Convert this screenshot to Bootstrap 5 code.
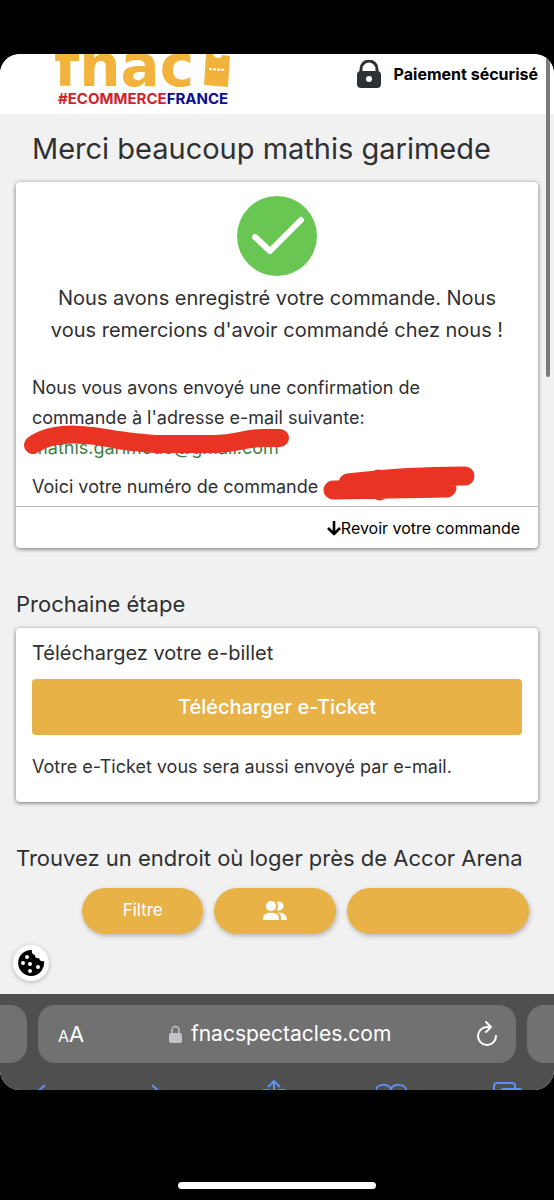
<!DOCTYPE html>
<html lang="fr">
<head>
<meta charset="utf-8">
<meta name="viewport" content="width=device-width, initial-scale=1">
<title>Confirmation de commande</title>
<link href="https://cdn.jsdelivr.net/npm/bootstrap@5.3.0/dist/css/bootstrap.min.css" rel="stylesheet">
<style>
  body { background: #000; color: #2f3032; font-family: Inter, "Liberation Sans", sans-serif; }
  .phone { min-height: 100vh; padding-top: 54px; }
  .viewport { background: #f1f1f1; border-radius: 20px; overflow: hidden; }
  .site-head { height: 60px; padding: 0 16px 0 54px; }
  .brand { height: 60px; overflow: hidden; text-decoration: none; }
  .brand-name { color: #f2b33d; font: 700 58px/24px "DejaVu Sans", sans-serif; height: 36px; }
  .brand-name span { display: block; }
  .tagline { font: 700 15px/18px Inter, sans-serif; color: #d0232b; padding-left: 4px; }
  .tagline b { color: #0b0b94; font-weight: 700; }
  .secure { color: #000; font-size: 16px; font-weight: 700; gap: 12px; height: 40px; }
  .page-title { font-size: 29px; line-height: 36px; font-weight: 400; padding: 17px 16px 15px; margin: 0; }
  .panel { background: #fff; border-radius: 4px; box-shadow: 0 1px 4px rgba(0,0,0,.55); }
  .order-body { padding: 14px 16px 0; }
  .lead-text { font-size: 20px; line-height: 32px; padding: 6px 12px 3px; }
  .body-text { font-size: 18px; line-height: 30px; }
  .mail-text { padding-right: 32px; margin-bottom: 9px; }
  .order-foot { border-top: 1px solid #b9b9b9; height: 42px; padding: 0 18px; }
  .order-foot a { color: #000; font-size: 16px; text-decoration: none; }
  .mail-link { color: #3f7d43; text-decoration: none; }
  .scribble { position: absolute; pointer-events: none; overflow: visible; }
  .scribble-mail { left: -9px; top: -5px; }
  .scribble-number { left: 100%; top: -8px; }
  .section-title { font-size: 22px; line-height: 32px; font-weight: 400; margin: 0; }
  .sub-title { font-size: 20px; line-height: 30px; font-weight: 400; padding-top: 2px; margin: 0 0 11px; }
  .btn-gold, .btn-gold:hover { background: #e8b247; color: #fff; border: 0; }
  .btn-ticket { font-size: 20px; height: 56px; border-radius: 4px; font-weight: 500; }
  .ticket-note { padding-top: 17px; }
  .pills { padding: 14px 25px 0 82px; gap: 11px; }
  .pill { height: 46px; border-radius: 23px; font-size: 17px; flex: 2 1 0; padding: 0; box-shadow: 1px 2px 5px rgba(0,0,0,.25); }
  .pill-wide { flex: 3 1 0; }
  .cookie { width: 36px; height: 36px; margin: 11px 0 13px 13px; box-shadow: 0 1px 5px rgba(0,0,0,.25); background: #fff; }
  .scroll-thumb { position: absolute; right: 4px; top: 0; width: 4px; height: 323px; background: #7b7b7b; border-radius: 0 0 2px 2px; }
  .browser-bar { background: #4f4f4f; padding-top: 11px; }
  .tab-edge, .address { background: #717172; height: 58px; }
  .tab-edge { width: 27px; }
  .tab-prev { border-radius: 0 17px 17px 0; }
  .tab-next { border-radius: 17px 0 0 17px; }
  .address { border-radius: 17px; margin: 0 11px; padding: 0 18px 0 20px; color: #fff; }
  .address button { background: none; border: 0; color: #fff; padding: 0; }
  .text-size { font-size: 22px; }
  .text-size small { font-size: 16px; }
  .url { font-size: 21px; gap: 9px; }
  .tools { height: 27px; padding: 17px 30px 0 28px; overflow: hidden; }
  .tools button { background: none; border: 0; padding: 0; height: 32px; }
  .tools svg, .pill svg, .cookie svg, .scribble { display: block; }
  .home-zone { padding: 92px 0 10px; }
  .home-line { width: 198px; height: 7px; border-radius: 4px; background: #fff; }
</style>
</head>
<body>
<div class="phone">
  <div class="viewport position-relative">
    <header class="site-head bg-white d-flex justify-content-between">
      <a href="#" class="brand">
        <div class="brand-name d-flex">
          <span>fnac</span>
          <svg class="ms-2" width="28" height="33" viewBox="0 0 28 33"><path fill="#f2b33d" d="M4 0H11C12 5 20 5 20 1L28 2L26 33L2 31Z"/><path stroke="#fff" stroke-width="2" stroke-dasharray="3 1" d="M7 15L22 16"/></svg>
        </div>
        <div class="tagline">#ECOMMERCE<b>FRANCE</b></div>
      </a>
      <div class="secure d-flex align-items-center">
        <svg width="26" height="28" viewBox="0 0 26 28"><path d="M5 12V9a8 8 0 0 1 16 0V12" fill="none" stroke="#2f3032" stroke-width="3"/><rect x="1" y="11" width="24" height="17" rx="4" fill="#2f3032"/><circle cx="13" cy="19" r="3" fill="#fff"/></svg>
        <span>Paiement sécurisé</span>
      </div>
    </header>

    <main>
      <div class="px-3">
        <h1 class="page-title">Merci beaucoup mathis garimede</h1>
        <section class="panel">
          <div class="order-body">
            <svg class="d-block mx-auto" width="80" height="80" viewBox="0 0 80 80"><circle cx="40" cy="40" r="40" fill="#69c653"/><path d="M18 41L33 55L64 24" fill="none" stroke="#fff" stroke-width="6" stroke-linecap="round" stroke-linejoin="round"/></svg>
            <p class="lead-text text-center mb-4">Nous avons enregistré votre commande. Nous vous remercions d'avoir commandé chez nous !</p>
            <p class="body-text mail-text">Nous vous avons envoyé une confirmation de commande à l'adresse e-mail suivante:<br>
              <span class="position-relative d-inline-block"><a class="mail-link" href="#">mathis.garimede@gmail.com</a>
                <svg class="scribble scribble-mail" width="268" height="32" viewBox="0 0 268 32"><path d="M10 17C32 1 70 7 95 12C125 17 140 16 190 16C215 16 220 10 240 10H257" fill="none" stroke="#e93323" stroke-width="18" stroke-linecap="round"/></svg></span></p>
            <p class="body-text mb-1"><span class="position-relative d-inline-block">Voici votre numéro de commande
                <svg class="scribble scribble-number" width="158" height="38" viewBox="0 0 158 38"><path d="M15 26L129 24M30 19Q84 12 147 12M60 15L62 27M30 22L129 20" fill="none" stroke="#e93323" stroke-width="19" stroke-linecap="round" stroke-linejoin="round"/></svg></span></p>
          </div>
          <div class="order-foot d-flex align-items-center justify-content-end">
            <a href="#" class="d-flex align-items-center"><svg width="14" height="16" viewBox="0 0 14 16"><path d="M7 1V14M1 8L7 14L13 8" fill="none" stroke="#000" stroke-width="2.6" stroke-linejoin="round"/></svg>Revoir votre commande</a>
          </div>
        </section>

        <h2 class="section-title pt-4 mt-3 pb-2">Prochaine étape</h2>
        <section class="panel px-3 pt-2 pb-3">
          <h3 class="sub-title">Téléchargez votre e-billet</h3>
          <button class="btn btn-gold btn-ticket w-100" type="button">Télécharger e-Ticket</button>
          <p class="body-text ticket-note mb-1">Votre e-Ticket vous sera aussi envoyé par e-mail.</p>
        </section>
        <h2 class="section-title text-nowrap pt-4 mt-3">Trouvez un endroit où loger près de Accor Arena</h2>
      </div>
      <div class="pills d-flex">
        <button class="btn btn-gold pill" type="button">Filtre</button>
        <button class="btn btn-gold pill d-flex align-items-center justify-content-center" type="button" aria-label="Voyageurs">
          <svg width="24" height="20" viewBox="0 0 24 20" fill="#fff"><circle cx="8" cy="5" r="5"/><path d="M14 1a4.500 4.500 0 1 1 0 8q2-4 0-8M0 19v-2c0-7 16-7 16 0v2zM18 19q1-5-3-7c5-1 9 2 9 7z"/></svg>
        </button>
        <button class="btn btn-gold pill pill-wide" type="button" aria-label="Dates"></button>
      </div>
      <button class="cookie btn rounded-circle p-0 d-flex align-items-center justify-content-center" type="button" aria-label="Cookies">
        <svg width="28" height="28" viewBox="0 0 28 28"><path d="M15 1A13 13 0 1 0 27 12Q23 13 22 9Q18 10 18 6Q14 5 15 1Z"/><g fill="#fff"><circle cx="10" cy="8" r="2"/><circle cx="6" cy="14" r="2"/><circle cx="13" cy="15" r="2"/><circle cx="21" cy="18" r="2"/><circle cx="13" cy="22" r="2"/></g></svg>
      </button>
    </main>
    <div class="scroll-thumb"></div>

    <footer class="browser-bar">
      <div class="d-flex">
        <div class="tab-edge tab-prev"></div>
        <div class="address flex-grow-1 d-flex align-items-center justify-content-between">
          <button class="text-size" type="button"><small>A</small>A</button>
          <button class="url d-flex align-items-center" type="button">
            <svg width="13" height="18" viewBox="0 0 13 18"><path d="M3 9V5a3.500 3.500 0 0 1 7 0V9" fill="none" stroke="#c3c2c8" stroke-width="1.500"/><rect y="8" width="13" height="10" rx="2" fill="#c3c2c8"/></svg>
            fnacspectacles.com</button>
          <button type="button" aria-label="Actualiser"><svg class="d-block" width="22" height="26" viewBox="0 0 22 26" fill="none" stroke="#fff" stroke-width="2" stroke-linecap="round" stroke-linejoin="round"><path d="M20 15A9 9 0 1 1 11 6H15M10 1L15 6L10 11"/></svg></button>
        </div>
        <div class="tab-edge tab-next"></div>
      </div>
      <div class="tools d-flex justify-content-between">
        <button type="button" aria-label="Précédent"><svg width="32" height="32" viewBox="0 0 32 32" fill="none" stroke="#5f8ff0" stroke-width="2"><path d="M17 5L6 15L17 26"/></svg></button>
        <button type="button" aria-label="Suivant"><svg width="32" height="32" viewBox="0 0 32 32" fill="none" stroke="#5f8ff0" stroke-width="2"><path d="M8 5L19 15L8 26"/></svg></button>
        <button type="button" aria-label="Partager"><svg width="32" height="32" viewBox="0 0 32 32" fill="none" stroke="#5f8ff0" stroke-width="2"><path d="M14 20V2M8 7L14 1L20 7M10 10H4V29H24V10H18"/></svg></button>
        <button type="button" aria-label="Signets"><svg width="32" height="32" viewBox="0 0 32 32" fill="none" stroke="#5f8ff0" stroke-width="2"><path d="M15 28V9C12 3 2 4 0 9V27Q8 22 15 28Q22 22 30 27V9C28 4 18 3 15 9"/></svg></button>
        <button type="button" aria-label="Onglets"><svg width="32" height="32" viewBox="0 0 32 32" fill="none" stroke="#5f8ff0" stroke-width="2"><path d="M8 24H5Q2 24 2 21V6Q2 3 5 3H20Q23 3 23 6V9"/><rect x="9" y="9" width="21" height="20" rx="3"/></svg></button>
      </div>
    </footer>
  </div>
  <div class="home-zone"><div class="home-line mx-auto"></div></div>
</div>
<script src="https://cdn.jsdelivr.net/npm/bootstrap@5.3.0/dist/js/bootstrap.bundle.min.js"></script>
</body>
</html>
